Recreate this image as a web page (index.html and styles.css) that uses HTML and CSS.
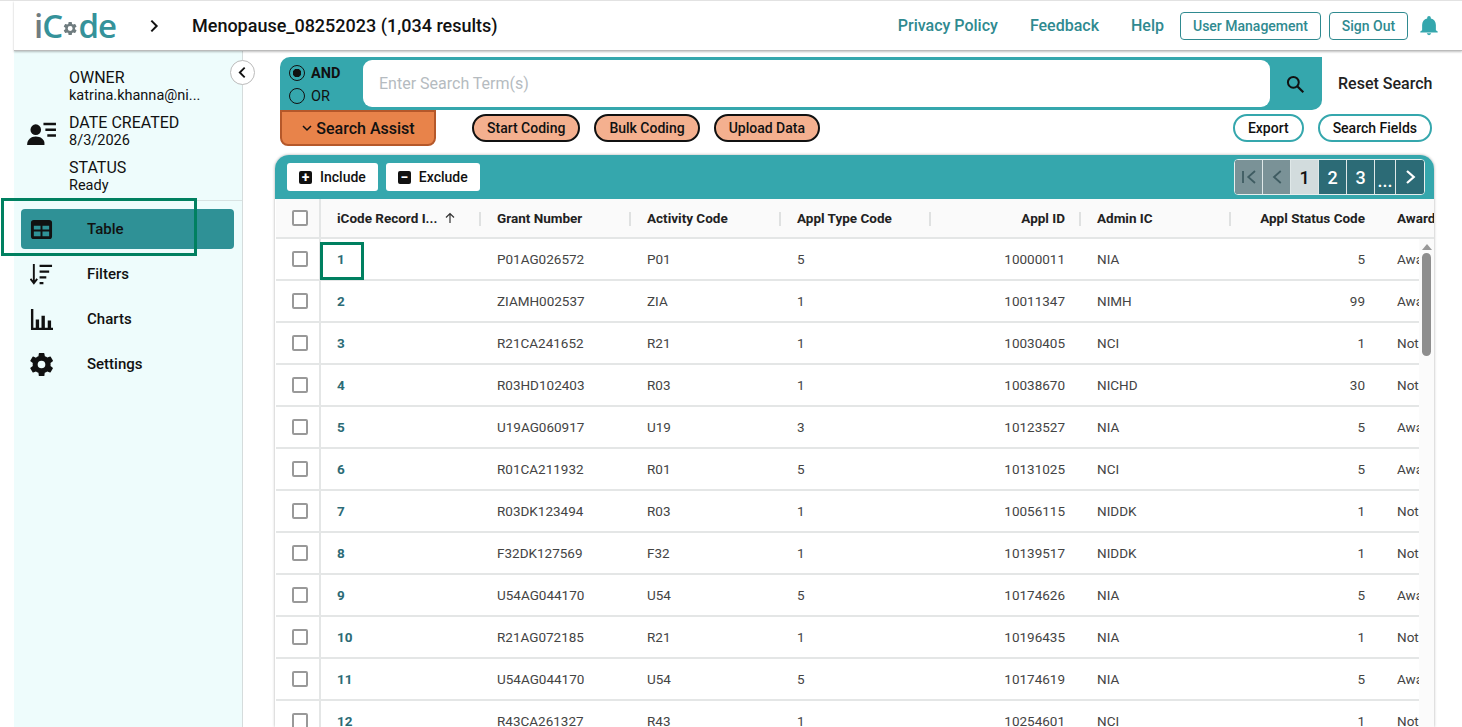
FILE: index.html
```html
<!DOCTYPE html>
<html lang="en">
<head>
    <meta charset="UTF-8">
    <meta name="viewport" content="width=device-width, initial-scale=1.0">
    <title>iCode</title>
    <link rel="stylesheet" href="styles.css">
</head>
<body>
    <div class="header">
        <div class="logo">
            <span class="logo-i">i</span><span class="logo-c">C</span>
            <svg class="logo-gear" viewBox="0 0 24 24"><path fill="#6f7c7f" d="M19.14 12.94c.04-.3.06-.61.06-.94s-.02-.64-.07-.94l2.03-1.58a.5.5 0 0 0 .12-.61l-1.92-3.32a.5.5 0 0 0-.59-.22l-2.39.96a7 7 0 0 0-1.62-.94l-.36-2.54a.5.5 0 0 0-.48-.41h-3.84a.5.5 0 0 0-.47.41l-.36 2.54c-.59.24-1.13.57-1.62.94l-2.39-.96a.5.5 0 0 0-.59.22L2.73 8.87a.5.5 0 0 0 .12.61l2.03 1.58c-.05.3-.08.63-.08.94s.02.64.07.94l-2.03 1.58a.5.5 0 0 0-.12.61l1.92 3.32c.12.22.37.29.59.22l2.39-.96c.5.38 1.03.7 1.62.94l.36 2.54c.05.24.24.41.48.41h3.84c.24 0 .44-.17.47-.41l.36-2.54c.59-.24 1.13-.56 1.62-.94l2.39.96c.22.08.47 0 .59-.22l1.92-3.32a.5.5 0 0 0-.12-.61zM12 15.6A3.6 3.6 0 1 1 12 8.4a3.6 3.6 0 0 1 0 7.2z"/></svg>
            <span class="logo-c">de</span>
        </div>
        <svg class="crumb" viewBox="0 0 24 24"><path d="M8 4l8 8-8 8" fill="none" stroke="#111" stroke-width="3"/></svg>
        <div class="title">Menopause_08252023 (1,034 results)</div>
        <div class="top-links">
            <a class="top-link">Privacy Policy</a>
            <a class="top-link">Feedback</a>
            <a class="top-link">Help</a>
        </div>
        <button class="top-btn user-btn">User Management</button>
        <button class="top-btn signout-btn">Sign Out</button>
        <svg class="bell" viewBox="0 0 24 24"><path fill="#35a7ad" d="M12 22a2.5 2.5 0 0 0 2.4-2h-4.8a2.5 2.5 0 0 0 2.4 2zm7.5-5.5V11c0-3.5-2-6.3-5.5-7.1V3a2 2 0 0 0-4 0v.9C6.500 4.700 4.500 7.500 4.500 11v5.500L2.500 18v1h19v-1z"/></svg>
    </div>

    <div class="layout">
        <div class="sidebar">
            <div class="meta">
                <svg class="meta-icon" viewBox="0 0 32 26">
                    <circle cx="9" cy="9" r="5.500" fill="#111"/>
                    <path fill="#111" d="M0 25c0-6 4-9 9-9s9 3 9 7v2z"/>
                    <path stroke="#111" stroke-width="2.600" d="M17 3h13M19 9h11M21 15h9"/>
                </svg>
                <div class="meta-text">
                    <div class="meta-block"><div>OWNER</div><div class="meta-value">katrina.khanna@ni...</div></div>
                    <div class="meta-block"><div>DATE CREATED</div><div class="meta-value">8/3/2026</div></div>
                    <div class="meta-block"><div>STATUS</div><div class="meta-value">Ready</div></div>
                </div>
            </div>
            <div class="nav">
                <div class="nav-item active">
                    <svg class="nav-icon" viewBox="0 0 24 24"><path fill="#111" d="M4 2h16a3 3 0 0 1 3 3v14a3 3 0 0 1-3 3H4a3 3 0 0 1-3-3V5a3 3 0 0 1 3-3zm0 6v4h7V8zm9 0v4h7V8zm-9 6v5h7v-5zm9 0v5h7v-5z"/></svg>
                    Table
                </div>
                <div class="nav-item">
                    <svg class="nav-icon" viewBox="0 0 24 24"><path fill="none" stroke="#111" stroke-width="2" d="M4 1v20M.500 16.500L4 21l3.500-4.500"/><path stroke="#111" stroke-width="2.400" d="M10 3h13M10 9h10M10 15h7M10 21h4"/></svg>
                    Filters
                </div>
                <div class="nav-item">
                    <svg class="nav-icon" viewBox="0 0 24 24"><path fill="#111" d="M1 1h2.500v20H1zM1 20.500h23V23H1zM6 12h3.500v9H6zM12 8h3.500v13H12zM18.500 13H22v8h-3.500z"/></svg>
                    Charts
                </div>
                <div class="nav-item">
                    <svg class="nav-icon" viewBox="0 0 24 24"><path fill="#111" d="M21.400 13.500c.1-.5.100-1 .1-1.500s0-1-.1-1.500l2.400-1.900a.6.6 0 0 0 .1-.7l-2.300-4a.6.6 0 0 0-.7-.2l-2.800 1.100a9 9 0 0 0-2.600-1.500L15 .4a.6.6 0 0 0-.6-.4H9.800a.6.6 0 0 0-.6.400l-.4 3a9 9 0 0 0-2.600 1.500L3.400 3.700a.6.6 0 0 0-.7.2l-2.300 4a.6.6 0 0 0 .1.700l2.400 1.900c-.1.5-.1 1-.1 1.500s0 1 .1 1.500L.5 15.400a.6.6 0 0 0-.1.700l2.300 4c.1.300.4.300.7.200l2.800-1.100a9 9 0 0 0 2.600 1.500l.4 3c.1.300.3.500.6.500h4.600c.3 0 .5-.2.600-.5l.4-3a9 9 0 0 0 2.600-1.500l2.800 1.100c.3.100.6 0 .7-.2l2.300-4a.6.6 0 0 0-.1-.7zM12 16a4 4 0 1 1 0-8 4 4 0 0 1 0 8z"/></svg>
                    Settings
                </div>
            </div>
            <button class="collapse-btn"><svg viewBox="0 0 24 24"><path d="M16 3l-9 9 9 9" fill="none" stroke="#111" stroke-width="3.400"/></svg></button>
        </div>

        <div class="main">
            <div class="search-row">
                <div class="search-bar">
                    <div class="radios">
                        <label class="radio-line strong"><span class="radio checked"></span>AND</label>
                        <label class="radio-line"><span class="radio"></span>OR</label>
                    </div>
                    <input class="search-input" type="text" placeholder="Enter Search Term(s)">
                    <button class="search-go"><svg viewBox="0 0 24 24"><circle cx="10" cy="10" r="6.500" fill="none" stroke="#111" stroke-width="2.400"/><path d="M15 15l7 7" stroke="#111" stroke-width="2.600"/></svg></button>
                </div>
                <div class="reset">Reset Search</div>
            </div>

            <div class="action-row">
                <button class="assist-btn"><svg viewBox="0 0 12 12"><path d="M2 4l4 4 4-4" fill="none" stroke="#111" stroke-width="1.500"/></svg>Search Assist</button>
                <div class="pills">
                    <button class="pill">Start Coding</button>
                    <button class="pill">Bulk Coding</button>
                    <button class="pill">Upload Data</button>
                </div>
                <div class="pills-right">
                    <button class="pill-light">Export</button>
                    <button class="pill-light">Search Fields</button>
                </div>
            </div>

            <div class="card">
                <div class="toolbar">
                    <button class="tool-btn"><span class="tool-sign">+</span>Include</button>
                    <button class="tool-btn"><span class="tool-sign">&minus;</span>Exclude</button>
                    <div class="pager">
                        <span class="page off"><svg viewBox="0 0 24 24"><path d="M4 4v16M20 4l-9 8 9 8" fill="none" stroke="#3f5c62" stroke-width="2.400"/></svg></span>
                        <span class="page off"><svg viewBox="0 0 24 24"><path d="M17 4l-9 8 9 8" fill="none" stroke="#3f5c62" stroke-width="2.400"/></svg></span>
                        <span class="page current">1</span>
                        <span class="page">2</span>
                        <span class="page">3</span>
                        <span class="page dots">...</span>
                        <span class="page"><svg viewBox="0 0 24 24"><path d="M8 4l9 8-9 8" fill="none" stroke="#fff" stroke-width="3"/></svg></span>
                    </div>
                </div>

                <div class="row head">
                    <div class="cell check"><span class="box"></span></div>
                    <div class="cell">iCode Record I... <svg class="sort" viewBox="0 0 12 12"><path d="M6 11V2M2 5.500L6 1.500l4 4" fill="none" stroke="#333" stroke-width="1.200"/></svg></div>
                    <div class="cell sep">Grant Number</div>
                    <div class="cell sep">Activity Code</div>
                    <div class="cell sep">Appl Type Code</div>
                    <div class="cell sep num">Appl ID</div>
                    <div class="cell sep">Admin IC</div>
                    <div class="cell sep num">Appl Status Code</div>
                    <div class="cell">Award Notice</div>
                </div>

                <div class="body">
                    <div class="rows">
                        <div class="row"><div class="cell check"><span class="box"></span></div><div class="cell id">1</div><div class="cell">P01AG026572</div><div class="cell">P01</div><div class="cell">5</div><div class="cell num">10000011</div><div class="cell">NIA</div><div class="cell num">5</div><div class="cell">Awarded</div></div>
                        <div class="row"><div class="cell check"><span class="box"></span></div><div class="cell id">2</div><div class="cell">ZIAMH002537</div><div class="cell">ZIA</div><div class="cell">1</div><div class="cell num">10011347</div><div class="cell">NIMH</div><div class="cell num">99</div><div class="cell">Awarded</div></div>
                        <div class="row"><div class="cell check"><span class="box"></span></div><div class="cell id">3</div><div class="cell">R21CA241652</div><div class="cell">R21</div><div class="cell">1</div><div class="cell num">10030405</div><div class="cell">NCI</div><div class="cell num">1</div><div class="cell">Not Awarded</div></div>
                        <div class="row"><div class="cell check"><span class="box"></span></div><div class="cell id">4</div><div class="cell">R03HD102403</div><div class="cell">R03</div><div class="cell">1</div><div class="cell num">10038670</div><div class="cell">NICHD</div><div class="cell num">30</div><div class="cell">Not Awarded</div></div>
                        <div class="row"><div class="cell check"><span class="box"></span></div><div class="cell id">5</div><div class="cell">U19AG060917</div><div class="cell">U19</div><div class="cell">3</div><div class="cell num">10123527</div><div class="cell">NIA</div><div class="cell num">5</div><div class="cell">Awarded</div></div>
                        <div class="row"><div class="cell check"><span class="box"></span></div><div class="cell id">6</div><div class="cell">R01CA211932</div><div class="cell">R01</div><div class="cell">5</div><div class="cell num">10131025</div><div class="cell">NCI</div><div class="cell num">5</div><div class="cell">Awarded</div></div>
                        <div class="row"><div class="cell check"><span class="box"></span></div><div class="cell id">7</div><div class="cell">R03DK123494</div><div class="cell">R03</div><div class="cell">1</div><div class="cell num">10056115</div><div class="cell">NIDDK</div><div class="cell num">1</div><div class="cell">Not Awarded</div></div>
                        <div class="row"><div class="cell check"><span class="box"></span></div><div class="cell id">8</div><div class="cell">F32DK127569</div><div class="cell">F32</div><div class="cell">1</div><div class="cell num">10139517</div><div class="cell">NIDDK</div><div class="cell num">1</div><div class="cell">Not Awarded</div></div>
                        <div class="row"><div class="cell check"><span class="box"></span></div><div class="cell id">9</div><div class="cell">U54AG044170</div><div class="cell">U54</div><div class="cell">5</div><div class="cell num">10174626</div><div class="cell">NIA</div><div class="cell num">5</div><div class="cell">Awarded</div></div>
                        <div class="row"><div class="cell check"><span class="box"></span></div><div class="cell id">10</div><div class="cell">R21AG072185</div><div class="cell">R21</div><div class="cell">1</div><div class="cell num">10196435</div><div class="cell">NIA</div><div class="cell num">1</div><div class="cell">Not Awarded</div></div>
                        <div class="row"><div class="cell check"><span class="box"></span></div><div class="cell id">11</div><div class="cell">U54AG044170</div><div class="cell">U54</div><div class="cell">5</div><div class="cell num">10174619</div><div class="cell">NIA</div><div class="cell num">5</div><div class="cell">Awarded</div></div>
                        <div class="row"><div class="cell check"><span class="box"></span></div><div class="cell id">12</div><div class="cell">R43CA261327</div><div class="cell">R43</div><div class="cell">1</div><div class="cell num">10254601</div><div class="cell">NCI</div><div class="cell num">1</div><div class="cell">Not Awarded</div></div>
                    </div>
                    <div class="scrollbar">
                        <span class="scroll-up"></span>
                        <span class="scroll-thumb"></span>
                    </div>
                </div>
            </div>
        </div>
    </div>

    <div class="mark mark-nav"></div>
    <div class="mark mark-cell"></div>
</body>
</html>
```

FILE: styles.css
```css
* {
    box-sizing: border-box;
}

body {
    margin: 0;
    height: 727px;
    overflow: hidden;
    padding-left: 14px;
    background: white;
    color: #111;
    font-family: Roboto, "Liberation Sans", sans-serif;
    border-top: 1px solid #e2e2e2;
    position: relative;
}

button {
    font-family: inherit;
    cursor: pointer;
}

/* top bar */
.header {
    height: 50px;
    display: flex;
    align-items: center;
    background: white;
    border-bottom: 1px solid #bbb;
    box-shadow: 0 1px 2px rgba(0,0,0,0.25);
    position: relative;
    z-index: 2;
}

.logo {
    margin-left: 20px;
    width: 82px;
    display: flex;
    align-items: center;
    font-family: "Open Sans", sans-serif;
    font-size: 33px;
    font-weight: 600;
    letter-spacing: -1px;
    line-height: 1;
}

.logo-i { color: #6f7c7f; }
.logo-c { color: #35929a; }

.logo-gear {
    width: 21px;
    height: 21px;
    margin: 5px 0 0 0;
}

.crumb {
    width: 16px;
    height: 16px;
    margin-left: 30px;
}

.title {
    margin-left: 30px;
    font-size: 18px;
    font-weight: 500;
    white-space: nowrap;
}

.top-links {
    margin-left: auto;
    display: flex;
    gap: 32px;
}

.top-link {
    color: #2f8a90;
    font-size: 16px;
    font-weight: 500;
}

.top-btn {
    height: 28px;
    background: white;
    color: #2f8a90;
    border: 1px solid #2f8a90;
    border-radius: 4px;
    font-size: 14px;
    font-weight: 500;
    padding: 0;
}

.user-btn { width: 141px; margin-left: 16px; }
.signout-btn { width: 79px; margin-left: 8px; }

.bell {
    width: 22px;
    height: 22px;
    margin: 0 22px 0 10px;
}

.layout {
    display: flex;
    height: 676px;
}

/* sidebar */
.sidebar {
    width: 229px;
    flex-shrink: 0;
    background: #eefcfc;
    border-right: 1px solid #d5dcdc;
    position: relative;
}

.meta {
    height: 150px;
    display: flex;
    align-items: center;
    padding: 12px 0 0 13px;
    border-bottom: 1px solid #d8e2e2;
}

.meta-icon {
    width: 31px;
    height: 25px;
    flex-shrink: 0;
    margin-top: 3px;
}

.meta-text {
    margin-left: 11px;
    display: flex;
    flex-direction: column;
    gap: 9px;
    font-size: 16px;
}

.meta-block {
    height: 36px;
    line-height: 18px;
}

.meta-value {
    font-size: 14.500px;
}

.nav {
    padding: 8px 8px 0 7px;
    display: flex;
    flex-direction: column;
    gap: 5px;
}

.nav-item {
    height: 40px;
    display: flex;
    align-items: center;
    padding-left: 9px;
    font-size: 15px;
    font-weight: 500;
    border-radius: 4px;
}

.nav-item.active {
    background: #2f9196;
}

.nav-icon {
    width: 23px;
    height: 23px;
    margin-right: 34px;
}

.collapse-btn {
    position: absolute;
    top: 9px;
    right: -13px;
    width: 25px;
    height: 25px;
    padding: 5px;
    background: white;
    border: 1px solid #bbb;
    border-radius: 50%;
    display: flex;
}

/* search */
.main {
    flex: 1;
    min-width: 0;
    padding: 6px 28px 0 32px;
}

.search-row {
    display: flex;
    align-items: center;
    margin-left: 5px;
}

.search-bar {
    width: 1042px;
    height: 53px;
    display: flex;
    align-items: center;
    background: #35a7ad;
    border-radius: 10px 0 10px 0;
}

.radios {
    width: 83px;
    flex-shrink: 0;
    padding: 2px 0 0 9px;
    font-size: 14.500px;
}

.radio-line {
    display: flex;
    align-items: center;
    gap: 6px;
    height: 23px;
}

.strong {
    font-weight: 700;
}

.radio {
    width: 16px;
    height: 16px;
    border: 1.500px solid #111;
    border-radius: 50%;
    display: inline-block;
}

.radio.checked {
    background: radial-gradient(circle, #111 0 4px, transparent 4.500px);
}

.search-input {
    width: 907px;
    height: 47px;
    border: none;
    outline: none;
    border-radius: 9px;
    padding: 0 16px;
    font-family: inherit;
    font-size: 16px;
}

.search-input::placeholder {
    color: #b5bbc0;
}

.search-go {
    flex: 1;
    background: none;
    border: none;
    padding: 0;
    display: flex;
    justify-content: center;
}

.search-go svg {
    width: 20px;
    height: 20px;
    margin-right: 2px;
}

.reset {
    margin-left: 16px;
    font-size: 16px;
    font-weight: 500;
    color: #222;
}

.action-row {
    display: flex;
    align-items: flex-start;
    margin-left: 5px;
}

.assist-btn {
    width: 156px;
    height: 36px;
    display: flex;
    align-items: center;
    justify-content: center;
    gap: 3px;
    background: #e8834a;
    border: 2px solid #b5582a;
    border-radius: 0 0 8px 8px;
    font-size: 16px;
    font-weight: 500;
    color: #111;
    padding: 0;
}

.assist-btn svg {
    width: 12px;
    height: 12px;
}

.pills {
    display: flex;
    gap: 14px;
    margin: 4px 0 0 36px;
}

.pill {
    height: 28px;
    padding: 0 13px;
    background: #f4b08f;
    border: 2px solid #111;
    border-radius: 14px;
    font-size: 14px;
    font-weight: 500;
    color: #111;
}

.pills-right {
    margin: 4px 2px 0 auto;
    display: flex;
    gap: 14px;
}

.pill-light {
    height: 28px;
    padding: 0 13px;
    background: white;
    border: 2px solid #35a7ad;
    border-radius: 14px;
    font-size: 14px;
    font-weight: 500;
    color: #111;
}

/* table card */
.card {
    margin-top: 9px;
    height: 572px;
    overflow: hidden;
    background: white;
    border-radius: 14px 14px 0 0;
    box-shadow: 0 0 3px rgba(0,0,0,0.35);
}

.toolbar {
    height: 44px;
    background: #35a7ad;
    display: flex;
    align-items: center;
    padding: 0 9px 0 12px;
    gap: 8px;
}

.tool-btn {
    height: 28px;
    display: flex;
    align-items: center;
    gap: 8px;
    padding: 0 12px;
    background: white;
    border: none;
    border-radius: 3px;
    font-size: 14px;
    font-weight: 500;
    color: #111;
}

.tool-sign {
    width: 13px;
    height: 13px;
    background: #111;
    color: white;
    border-radius: 2px;
    font-size: 14px;
    font-weight: 700;
    line-height: 13px;
    text-align: center;
}

.pager {
    margin-left: auto;
    display: flex;
    height: 36px;
    background: #2c6b76;
    border: 1px solid #e8eeee;
    border-radius: 4px;
    overflow: hidden;
}

.page {
    width: 28px;
    display: flex;
    align-items: center;
    justify-content: center;
    background: #2c6b76;
    border-right: 1px solid #dfe8e8;
    color: white;
    font-size: 18px;
    font-weight: 500;
}

.page:last-child {
    border-right: none;
}

.page svg {
    width: 18px;
    height: 18px;
}

.page.off {
    background: #7a9297;
}

.page.current {
    background: #d2dcdd;
    color: #111;
}

.page.dots {
    width: 21px;
    align-items: flex-end;
    padding-bottom: 3px;
}

.row {
    height: 42px;
    display: grid;
    grid-template-columns: 45px 160px 150px 150px 150px 150px 150px 150px 150px;
    align-items: center;
    border-bottom: 2px solid #e4e6e6;
    font-size: 13.500px;
    color: #444;
    overflow: hidden;
    white-space: nowrap;
}

.row.head {
    height: 40px;
    margin-left: 1px;
    background: #fafafa;
    font-size: 13.500px;
    font-weight: 700;
    color: #222;
}

.cell {
    padding: 0 16px;
    height: 100%;
    display: flex;
    align-items: center;
    position: relative;
}

.cell.num {
    justify-content: flex-end;
}

.cell.check {
    padding: 0 0 0 16px;
    border-right: 2px solid #e4e6e6;
}

.cell.id {
    color: #2c6b76;
    font-weight: 700;
}

.cell.sep::after {
    content: "";
    position: absolute;
    left: -2px;
    top: 13px;
    height: 14px;
    width: 2px;
    background: #dfe1e1;
}

.sort {
    width: 12px;
    height: 12px;
    margin-left: 7px;
}

.box {
    width: 16px;
    height: 16px;
    border: 2px solid #999;
    border-radius: 2px;
    background: white;
}

.body {
    display: flex;
}

.rows {
    width: 1143px;
    margin-left: 1px;
    flex-shrink: 0;
}

.scrollbar {
    flex: 1;
    background: #fbfbfb;
    display: flex;
    flex-direction: column;
    align-items: center;
    padding-top: 5px;
}

.scroll-up {
    width: 0;
    height: 0;
    border-left: 5px solid transparent;
    border-right: 5px solid transparent;
    border-bottom: 6px solid #999;
}

.scroll-thumb {
    width: 9px;
    height: 103px;
    margin-top: 3px;
    background: #8e8e8e;
    border-radius: 5px;
}

/* green highlight boxes over the page */
.mark {
    position: absolute;
    border: 3px solid #008060;
    z-index: 3;
}

.mark-nav {
    left: 1px;
    top: 197px;
    width: 196px;
    height: 58px;
}

.mark-cell {
    left: 320px;
    top: 241px;
    width: 44px;
    height: 38px;
}
```
